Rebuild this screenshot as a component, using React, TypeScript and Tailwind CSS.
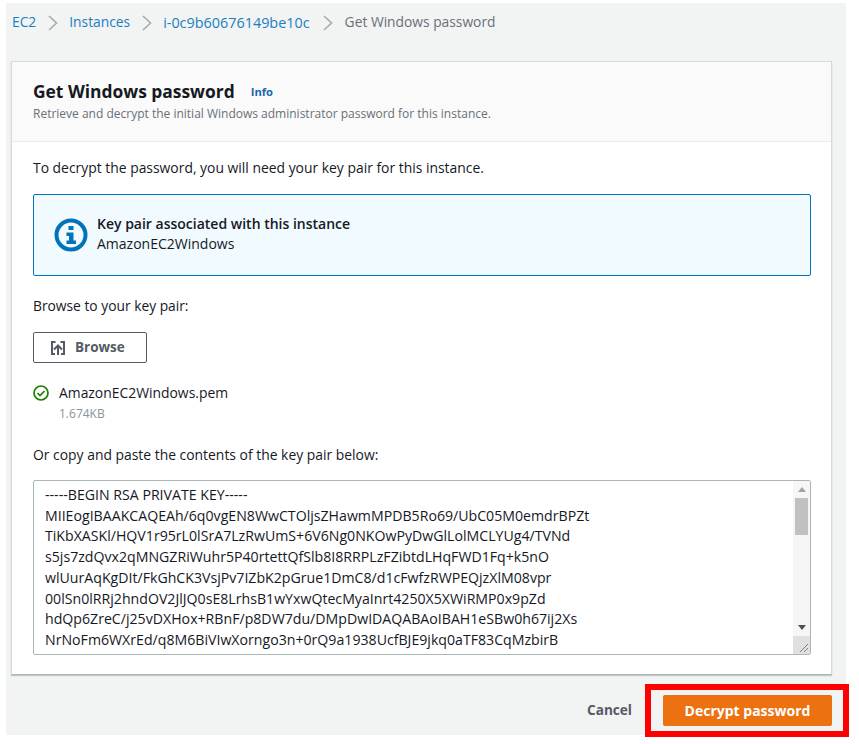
const KEY_LINES = [
  "-----BEGIN RSA PRIVATE KEY-----",
  "MIIEogIBAAKCAQEAh/6q0vgEN8WwCTOljsZHawmMPDB5Ro69/UbC05M0emdrBPZt",
  "TiKbXASKl/HQV1r95rL0lSrA7LzRwUmS+6V6Ng0NKOwPyDwGlLolMCLYUg4/TVNd",
  "s5js7zdQvx2qMNGZRiWuhr5P40rtettQfSlb8I8RRPLzFZibtdLHqFWD1Fq+k5nO",
  "wlUurAqKgDIt/FkGhCK3VsjPv7IZbK2pGrue1DmC8/d1cFwfzRWPEQjzXlM08vpr",
  "00lSn0lRRj2hndOV2JlJQ0sE8LrhsB1wYxwQtecMyaInrt4250X5XWiRMP0x9pZd",
  "hdQp6ZreC/j25vDXHox+RBnF/p8DW7du/DMpDwIDAQABAoIBAH1eSBw0h67ij2Xs",
  "NrNoFm6WXrEd/q8M6BiVIwXorngo3n+0rQ9a1938UcfBJE9jkq0aTF83CqMzbirB",
];

function Chevron() {
  return (
    <svg width="10" height="16" viewBox="0 0 10 16" fill="none" stroke="#a8aeae" strokeWidth="1.7">
      <path d="M1 1l7.500 7L1 15" />
    </svg>
  );
}

export default function App() {
  return (
    <div className="relative h-[744px] w-[859px] overflow-hidden bg-white pl-[6px] pt-[3px] font-['Open_Sans',sans-serif] text-[#16191f]">
      <div className="flex h-[732px] w-[840px] flex-col bg-[#f2f3f3]">
        {/* Breadcrumbs */}
        <div className="flex h-[40px] items-center pb-[1px] pl-[6px] text-[13.8px]">
          <span className="text-[#1a7fc1]">EC2</span>
          <span className="ml-[12px] mr-[11px]"><Chevron /></span>
          <span className="text-[#1a7fc1]">Instances</span>
          <span className="ml-[12px] mr-[11px]"><Chevron /></span>
          <span className="text-[14.4px] text-[#1a7fc1]">i-0c9b60676149be10c</span>
          <span className="ml-[13px] mr-[12px]"><Chevron /></span>
          <span className="text-[#687078]">Get Windows password</span>
        </div>

        {/* Card */}
        <div className="ml-[5px] mt-[18px] flex h-[614px] w-[821px] flex-col border border-[#d5dbdb] border-b-[#aab7b8] bg-white shadow-[0_1px_1px_rgba(0,28,36,0.2)]">
          <div className="h-[80px] border-b border-[#eaeded] bg-[#fafafa] pl-[21px] pt-[15px]">
            <div className="flex items-center">
              <span className="text-[17.400px] font-bold leading-[28px]">Get Windows password</span>
              <span className="ml-[16px] mt-[3px] text-[11.200px] font-bold text-[#1a66ad]">Info</span>
            </div>
            <div className="text-[12px] leading-[18px] text-[#687078]">
              Retrieve and decrypt the initial Windows administrator password for this instance.
            </div>
          </div>

          <div className="flex flex-1 flex-col px-[21px]">
            <div className="mt-[16px] text-[13.900px] leading-[20px]">
              To decrypt the password, you will need your key pair for this instance.
            </div>

            <div className="mt-[16px] flex h-[82px] w-[778px] items-center rounded-[2px] border border-[#0073bb] bg-[#f1faff] pl-[20px]">
              <svg width="34" height="34" viewBox="0 0 34 34">
                <circle cx="17" cy="17" r="14.500" fill="none" stroke="#0073bb" strokeWidth="4" />
                <rect x="14.500" y="8" width="5" height="4" fill="#0073bb" />
                <path d="M12.500 14.500h7v8h2.500v3.500H12.500v-3.500h2.500v-4.500h-2.500z" fill="#0073bb" />
              </svg>
              <div className="ml-[9px] pb-[2px]">
                <div className="text-[14px] font-semibold leading-[20px]">Key pair associated with this instance</div>
                <div className="text-[14px] leading-[20px]">AmazonEC2Windows</div>
              </div>
            </div>

            <div className="mt-[20px] text-[13.800px] leading-[20px]">Browse to your key pair:</div>

            <div className="mt-[16px] flex h-[31px] w-[114px] items-center rounded-[2px] border border-[#545b64] bg-white pl-[16px]">
              <svg width="16" height="16" viewBox="0 0 16 16" fill="none" stroke="#545b64" strokeWidth="2">
                <path d="M5.500 2H2v12h3M10.500 2H14v12h-3" />
                <path d="M8 15V5.500M4 9.500l4-4 4 4" />
              </svg>
              <span className="ml-[9px] text-[13.500px] font-bold text-[#545b64]">Browse</span>
            </div>

            <div className="mt-[20px] flex items-center">
              <svg width="16" height="16" viewBox="0 0 16 16" fill="none" stroke="#1d8102" strokeWidth="1.700">
                <circle cx="8" cy="8" r="7" />
                <path d="M4.500 8l2.500 2.500 4.500-4.500" />
              </svg>
              <span className="ml-[10px] text-[13.900px] leading-[20px]">AmazonEC2Windows.pem</span>
            </div>
            <div className="ml-[26px] mt-[3px] text-[12px] leading-[16px] text-[#879596]">1.674KB</div>

            <div className="mt-[23px] text-[13.900px] leading-[20px]">Or copy and paste the contents of the key pair below:</div>

            {/* Key textarea */}
            <div className="mt-[15px] flex h-[175px] w-[778px] overflow-hidden rounded-[2px] border border-[#aab7b8] bg-white">
              <div className="flex-1 overflow-hidden whitespace-nowrap pl-[11px] pt-[4px] text-[14.150px] leading-[20.700px]">
                {KEY_LINES.map((line) => (
                  <div key={line}>{line}</div>
                ))}
              </div>
              <div className="relative flex w-[17px] flex-col bg-[#f6f6f6]">
                <div className="flex h-[17px] items-center justify-center">
                  <div className="h-0 w-0 border-x-[4px] border-b-[5px] border-x-transparent border-b-[#a3a3a3]" />
                </div>
                <div className="mx-[2px] h-[37px] bg-[#c1c1c1]" />
                <div className="flex-1" />
                <div className="mb-[18px] flex h-[18px] items-center justify-center">
                  <div className="h-0 w-0 border-x-[4px] border-t-[5px] border-x-transparent border-t-[#505050]" />
                </div>
                <svg className="absolute bottom-0 right-0" width="17" height="18" viewBox="0 0 17 18" stroke="#808080" strokeWidth="1">
                  <rect width="17" height="18" fill="#e0e0e0" stroke="none" />
                  <path d="M7 16L15 8M11 16L15 12" />
                </svg>
              </div>
            </div>
          </div>
        </div>

        {/* Footer */}
        <div className="mr-[14px] mt-[20px] flex items-center justify-end">
          <span className="mr-[31px] text-[13.600px] font-bold text-[#545b64]">Cancel</span>
          <div className="flex h-[31px] w-[169px] items-center justify-center rounded-[2px] bg-[#ec7211] text-[14px] font-bold text-white">
            Decrypt password
          </div>
        </div>
      </div>

      {/* Red highlight */}
      <div className="absolute left-[645px] top-[684px] h-[53px] w-[204px] border-[6px] border-[#ff0000]" />
    </div>
  );
}
